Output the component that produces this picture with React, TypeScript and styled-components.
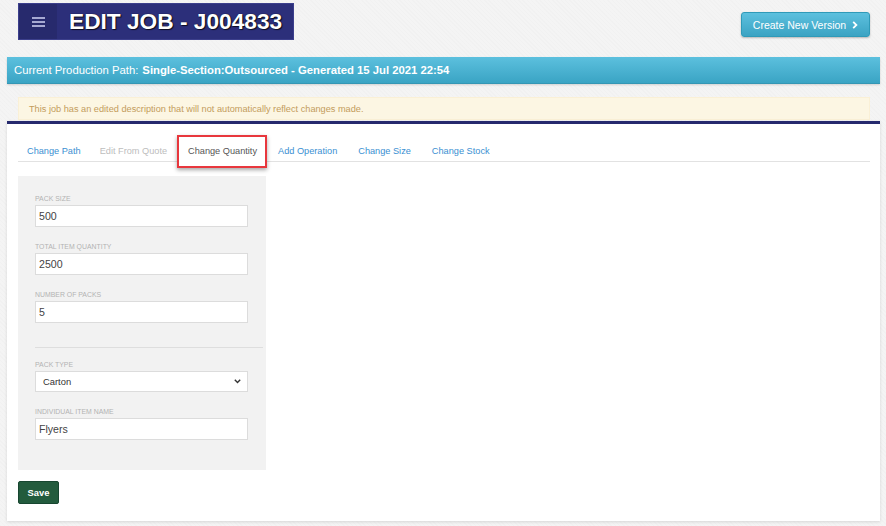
import React, { useState } from "react";
import styled, { createGlobalStyle } from "styled-components";

const GlobalStyle = createGlobalStyle`
  html, body {
    margin: 0;
    padding: 0;
    background: #f4f4f4;
    font-family: "Liberation Sans", Arial, sans-serif;
  }
  * {
    box-sizing: border-box;
  }
`;

const Page = styled.div`
  width: 886px;
  min-height: 526px;
  padding: 0 6px 0 7px;
  background-color: #f4f4f4;
  background-image: repeating-linear-gradient(
    45deg,
    rgba(0, 0, 0, 0.012) 0px,
    rgba(0, 0, 0, 0.012) 1px,
    transparent 1px,
    transparent 3px
  );
`;

const Header = styled.div`
  display: flex;
  justify-content: space-between;
  align-items: flex-start;
  padding: 3px 10px 0 11px;
  height: 57px;
`;

const TitleBox = styled.div`
  display: flex;
  align-items: stretch;
  height: 37px;
  width: 276px;
  background: #2c2f7a;
  border: 1px solid #3c3f8c;
`;

const MenuButton = styled.div`
  width: 38px;
  display: flex;
  align-items: center;
  justify-content: center;
  background: #272a6d;
`;

const Title = styled.h1`
  margin: 0 0 0 12px;
  align-self: center;
  color: #fff;
  font-size: 22.7px;
  font-weight: bold;
  text-shadow: 0 0 1px #000, 1px 1px 1px rgba(0, 0, 0, 0.7);
  white-space: nowrap;
`;

const CreateButton = styled.button`
  margin-top: 9px;
  height: 25px;
  width: 129px;
  display: flex;
  align-items: center;
  justify-content: center;
  gap: 6px;
  border: 1px solid #2f9ab8;
  border-radius: 3px;
  background: linear-gradient(#5cc0de, #3ba3c3);
  box-shadow: 0 1px 2px rgba(0, 0, 0, 0.25);
  color: #fff;
  font-family: "Liberation Sans", Arial, sans-serif;
  font-size: 10.5px;
  padding: 0;
  cursor: pointer;
`;

const PathBar = styled.div`
  height: 27px;
  display: flex;
  align-items: center;
  padding: 0 7px;
  background: linear-gradient(#5cc0de, #3aa4c4);
  border-bottom: 1px solid #3496b4;
  box-shadow: 0 1px 2px rgba(0, 0, 0, 0.15);
  color: #fff;
  font-size: 11.3px;
  white-space: nowrap;

  b {
    margin-left: 4px;
  }
`;

const Alert = styled.div`
  margin: 13px 10px 0 11px;
  height: 23px;
  display: flex;
  align-items: center;
  padding: 0 10px;
  background: #fcf6e3;
  border: 1px solid #faf0d6;
  color: #c39c5c;
  font-size: 9.2px;
  white-space: nowrap;
`;

const Card = styled.div`
  margin-top: 1px;
  background: #fff;
  border-top: 3px solid #262a6e;
  padding: 11px 10px 17px 11px;
  box-shadow: 0 1px 3px rgba(0, 0, 0, 0.12);
`;

const TabBar = styled.ul`
  display: flex;
  list-style: none;
  margin: 0;
  padding: 0;
  height: 27px;
  border-bottom: 1px solid #e2e2e2;
`;

const Tab = styled.li<{ $state: "link" | "disabled" | "active" }>`
  height: 33px;
  display: flex;
  align-items: center;
  padding: 0 8px 1px 9px;
  border: 2px solid ${(p) => (p.$state === "active" ? "#e8373d" : "transparent")};
  background: ${(p) => (p.$state === "active" ? "#fff" : "transparent")};
  box-shadow: ${(p) =>
    p.$state === "active" ? "0 2px 4px rgba(0, 0, 0, 0.35)" : "none"};
  position: relative;
  z-index: ${(p) => (p.$state === "active" ? 1 : 0)};
  color: ${(p) =>
    p.$state === "active" ? "#555" : p.$state === "disabled" ? "#bdbdbd" : "#3a8fd2"};
  font-size: 9.2px;
  white-space: nowrap;
  cursor: ${(p) => (p.$state === "disabled" ? "default" : "pointer")};

  &:first-child {
    margin-left: -2px;
    padding-right: 6px;
  }
`;

const Panel = styled.div`
  margin-top: 14px;
  width: 248px;
  background: #f2f2f2;
  padding: 18px 3px 15px 17px;
`;

const Group = styled.div`
  width: 213px;
  margin-bottom: 15px;
`;

const Label = styled.label`
  display: block;
  height: 9px;
  line-height: 9px;
  margin-bottom: 2px;
  color: #b3b3b3;
  font-size: 6.9px;
  text-transform: uppercase;
`;

const Input = styled.input`
  display: block;
  width: 100%;
  height: 22px;
  padding: 0 3px;
  border: 1px solid #dcdcdc;
  background: #fff;
  color: #444;
  font-family: "Liberation Sans", Arial, sans-serif;
  font-size: 10.6px;
  outline: none;
`;

const SelectWrap = styled.div`
  position: relative;
  height: 21px;
  border: 1px solid #dcdcdc;
  background: #fff;
  display: flex;
  align-items: center;

  svg {
    position: absolute;
    right: 6px;
    top: 7px;
    pointer-events: none;
  }
`;

const Select = styled.select`
  appearance: none;
  width: 100%;
  height: 100%;
  border: none;
  background: transparent;
  padding: 0 0 0 7px;
  color: #333;
  font-family: "Liberation Sans", Arial, sans-serif;
  font-size: 9.4px;
  outline: none;
`;

const Divider = styled.hr`
  margin: 24px 0 12px;
  border: none;
  border-top: 1px solid #dedede;
`;

const SaveButton = styled.button`
  margin-top: 11px;
  height: 23px;
  width: 41px;
  border: 1px solid #174630;
  border-radius: 2px;
  background: #235b3d;
  color: #fff;
  font-family: "Liberation Sans", Arial, sans-serif;
  font-size: 9.4px;
  font-weight: bold;
  cursor: pointer;
`;

const tabs: { label: string; state: "link" | "disabled" | "active" }[] = [
  { label: "Change Path", state: "link" },
  { label: "Edit From Quote", state: "disabled" },
  { label: "Change Quantity", state: "active" },
  { label: "Add Operation", state: "link" },
  { label: "Change Size", state: "link" },
  { label: "Change Stock", state: "link" },
];

function App() {
  const [packSize, setPackSize] = useState("500");
  const [total, setTotal] = useState("2500");
  const [packs, setPacks] = useState("5");
  const [packType, setPackType] = useState("Carton");
  const [itemName, setItemName] = useState("Flyers");

  return (
    <Page>
      <GlobalStyle />
      <Header>
        <TitleBox>
          <MenuButton>
            <svg width="13" height="10" viewBox="0 0 13 10">
              <rect x="0" y="0" width="13" height="2" fill="#a6a9d2" />
              <rect x="0" y="4" width="13" height="2" fill="#a6a9d2" />
              <rect x="0" y="8" width="13" height="2" fill="#a6a9d2" />
            </svg>
          </MenuButton>
          <Title>EDIT JOB - J004833</Title>
        </TitleBox>
        <CreateButton>
          Create New Version
          <svg width="6" height="8" viewBox="0 0 6 8">
            <path d="M1.2 0.8 L4.4 4 L1.2 7.2" stroke="#fff" strokeWidth="1.8" fill="none" />
          </svg>
        </CreateButton>
      </Header>

      <PathBar>
        Current Production Path:
        <b>Single-Section:Outsourced - Generated 15 Jul 2021 22:54</b>
      </PathBar>

      <Alert>This job has an edited description that will not automatically reflect changes made.</Alert>

      <Card>
        <TabBar>
          {tabs.map((t) => (
            <Tab key={t.label} $state={t.state}>
              {t.label}
            </Tab>
          ))}
        </TabBar>

        <Panel>
          <Group>
            <Label>Pack Size</Label>
            <Input value={packSize} onChange={(e) => setPackSize(e.target.value)} />
          </Group>
          <Group>
            <Label>Total Item Quantity</Label>
            <Input value={total} onChange={(e) => setTotal(e.target.value)} />
          </Group>
          <Group>
            <Label>Number of Packs</Label>
            <Input value={packs} onChange={(e) => setPacks(e.target.value)} />
          </Group>
          <Divider />
          <Group>
            <Label>Pack Type</Label>
            <SelectWrap>
              <Select value={packType} onChange={(e) => setPackType(e.target.value)}>
                <option>Carton</option>
                <option>Box</option>
                <option>Bundle</option>
              </Select>
              <svg width="7" height="5" viewBox="0 0 7 5">
                <path d="M0.8 0.8 L3.5 3.6 L6.2 0.8" stroke="#333" strokeWidth="1.4" fill="none" />
              </svg>
            </SelectWrap>
          </Group>
          <Group>
            <Label>Individual Item Name</Label>
            <Input value={itemName} onChange={(e) => setItemName(e.target.value)} />
          </Group>
        </Panel>

        <SaveButton>Save</SaveButton>
      </Card>
    </Page>
  );
}

export default App;
